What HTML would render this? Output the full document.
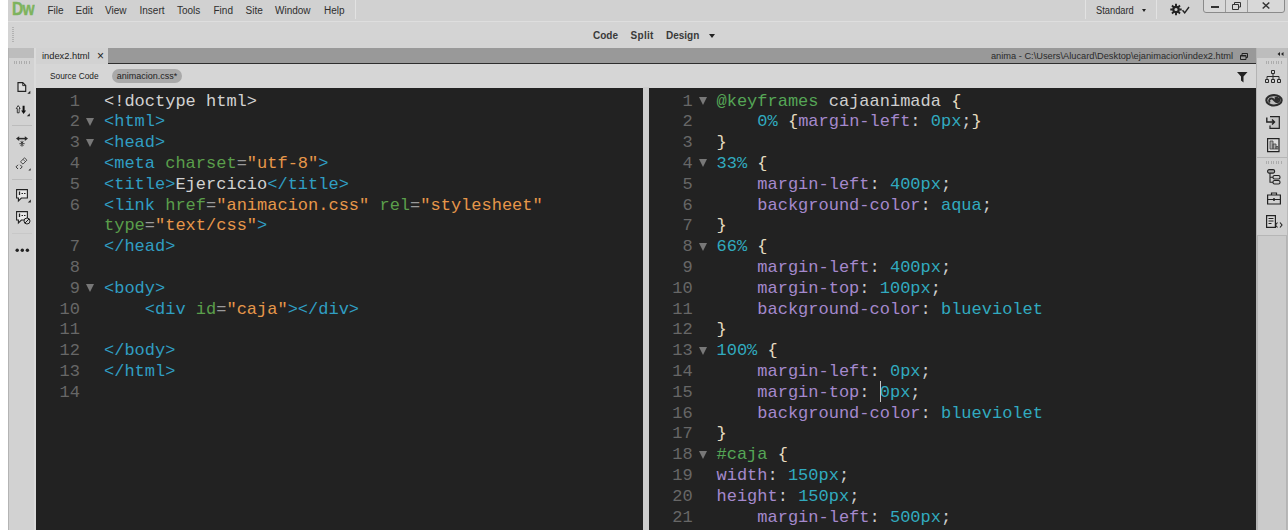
<!DOCTYPE html>
<html>
<head>
<meta charset="utf-8">
<title>Dreamweaver</title>
<style>
html,body{margin:0;padding:0;}
body{width:1288px;height:530px;overflow:hidden;background:#fff;position:relative;font-family:"Liberation Sans",sans-serif;color:#222;}
.abs{position:absolute;}
#menubar{left:8px;top:0;width:1280px;height:21px;background:#d1d1d1;}
#menubar .mi{position:absolute;top:3.500px;font-size:10px;line-height:13px;color:#2e2e2e;white-space:nowrap;}
#dw{-webkit-text-stroke:0.400px #7db35d;position:absolute;left:4px;top:-2px;font-size:19px;line-height:22px;font-weight:bold;color:#7db35d;letter-spacing:-1px;transform:scaleX(0.82);transform-origin:0 0;}
#toolbar{left:8px;top:21px;width:1280px;height:27px;background:#d4d4d4;border-top:1px solid #dedede;box-sizing:border-box;}
#toolbar .v{position:absolute;top:6.600px;font-size:10px;line-height:13px;font-weight:bold;color:#3a3a3a;}
#tabbar{left:36px;top:48px;width:1220px;height:16px;background:#999999;border-bottom:1px solid #2e2e2e;box-sizing:border-box;}
#tab{position:absolute;left:0;top:0;width:72px;height:16px;background:#d2d2d2;font-size:9.3px;line-height:15px;color:#222;}
#path{position:absolute;right:23px;top:1px;font-size:9.27px;line-height:15px;color:#2a2a2a;white-space:nowrap;}
#srcbar{left:36px;top:64px;width:1220px;height:24px;background:#d6d6d6;}
#srcbar .sc{position:absolute;left:14px;top:6px;font-size:9px;line-height:12px;color:#222;transform:scaleX(0.926);transform-origin:0 0;white-space:nowrap;}
#pill{position:absolute;left:76px;top:5px;width:70px;height:14px;border-radius:7px;background:#a9a9a9;font-size:9px;line-height:14px;text-align:center;color:#222;}
#leftbar{left:8px;top:48px;width:28px;height:482px;background:#d2d2d2;border-left:1px solid #b4b4b4;box-sizing:border-box;}
#leftbar .top{position:absolute;left:0;top:0;width:25px;height:10px;background:#bdbdbd;}
#leftbar .rb{position:absolute;left:25px;top:0;width:2px;height:482px;background:#dbdbdb;}
.grip{position:absolute;height:3px;background:repeating-linear-gradient(90deg,#acacac 0,#acacac 1px,transparent 1px,transparent 2.5px);}
.hsep{position:absolute;height:1px;background:#bcbcbc;}
svg{position:absolute;overflow:visible;}
#rightbar{left:1256px;top:48px;width:32px;height:482px;background:#d1d1d1;border-left:1px solid #b4b4b4;border-right:1px solid #b9b9b9;box-sizing:border-box;}
#rightbar .top{position:absolute;left:0;top:0;width:30px;height:10px;background:#bdbdbd;}
.ed{background:#222222;overflow:hidden;font-family:"Liberation Mono","DejaVu Sans Mono",monospace;font-size:17px;line-height:20.8px;color:#d6d6d6;}
#ed1{left:36px;top:88px;width:607px;height:442px;}
#ed2{left:649px;top:88px;width:607px;height:442px;}
#split{left:643px;top:87px;width:6px;height:443px;background:#cdcdcd;}
.ed{padding-top:3.6px;box-sizing:border-box;}
.row{position:relative;height:20.8px;}
.ln{position:absolute;left:0;top:0;width:44px;text-align:right;color:#676767;}
#ed2 .ln{width:43.7px;}
.code{position:absolute;left:68px;top:0;white-space:pre;}
#ed2 .code{left:67.5px;}
.fold{position:absolute;left:49.7px;top:5.4px;width:0;height:0;border-left:4.75px solid transparent;border-right:4.75px solid transparent;border-top:8.6px solid #787878;}
#ed2 .fold{left:49.5px;}
.t{color:#309ec2;}
.a{color:#5a9e4b;}
.s{color:#e6974a;}
.w{color:#d2d2d2;}
.e{color:#9a9a9a;}
.p{color:#a589cd;}
.n{color:#31aabf;}
.g{color:#55a656;}
.b{color:#e6dcc0;}
.c{color:#cfcfcf;}
</style>
</head>
<body>
<div id="menubar" class="abs">
<div id="dw">Dw</div>
<span class="mi" style="left:39.5px">File</span>
<span class="mi" style="left:67.5px">Edit</span>
<span class="mi" style="left:97px">View</span>
<span class="mi" style="left:131.5px">Insert</span>
<span class="mi" style="left:169px">Tools</span>
<span class="mi" style="left:205.5px">Find</span>
<span class="mi" style="left:237.5px">Site</span>
<span class="mi" style="left:267px">Window</span>
<span class="mi" style="left:316px">Help</span>
<div style="position:absolute;left:347px;top:0;width:1px;height:19px;background:#e2e2e2"></div>
<div style="position:absolute;left:1077px;top:0;width:1px;height:19px;background:#e2e2e2"></div>
<span class="mi" style="left:1088px;transform:scaleX(0.93);transform-origin:0 0;color:#2c2c2c">Standard</span>
<div style="position:absolute;left:1134px;top:9px;width:0;height:0;border-left:2.5px solid transparent;border-right:2.5px solid transparent;border-top:3px solid #222"></div>
<div style="position:absolute;left:1148px;top:0;width:1px;height:19px;background:#e2e2e2"></div>
<svg style="left:1162px;top:3px" width="22" height="13" viewBox="0 0 22 13"><g fill="none" stroke="#222"><circle cx="6" cy="6.500" r="2.700" stroke-width="2.200"/><path d="M6 0.800v2.400M6 9.800v2.400M0.300 6.500h2.400M9.300 6.500h2.400M2 2.500l1.700 1.700M8.300 8.800l1.700 1.700M2 10.500l1.700-1.700M8.300 4.200l1.700-1.700" stroke-width="1.900"/></g><path d="M12.500 7.200l2.200 2.600l4.300-5.800" fill="none" stroke="#222" stroke-width="1.400"/></svg>
<div style="position:absolute;left:1195px;top:-3px;width:82px;height:16px;border:1px solid #8a8a8a;border-radius:3px;box-sizing:border-box;background:#d8d8d8"></div>
<div style="position:absolute;left:1217px;top:0;width:1px;height:12px;background:#9a9a9a"></div>
<div style="position:absolute;left:1239px;top:0;width:1px;height:12px;background:#9a9a9a"></div>
<div style="position:absolute;left:1203px;top:6px;width:8px;height:2px;background:#333"></div>
<svg style="left:1224px;top:2px" width="9" height="8" viewBox="0 0 9 8"><path d="M2.5 2.5v-2h6v4.500h-2M0.5 2.500h6v5h-6z" fill="none" stroke="#333" stroke-width="1"/></svg>
<svg style="left:1254px;top:2px" width="8" height="7" viewBox="0 0 8 7"><path d="M0.700 0.500l6.600 6M7.300 0.500l-6.600 6" fill="none" stroke="#333" stroke-width="1.5"/></svg>
</div>
<div id="toolbar" class="abs">
<div style="position:absolute;left:4px;top:5px;width:2px;height:15px;background:repeating-linear-gradient(180deg,#b2b2b2 0,#b2b2b2 1px,transparent 1px,transparent 2px)"></div>
<span class="v" style="left:585px">Code</span>
<span class="v" style="left:622.500px;letter-spacing:0.300px">Split</span>
<span class="v" style="left:658px">Design</span>
<div style="position:absolute;left:701px;top:12px;width:0;height:0;border-left:3.500px solid transparent;border-right:3.500px solid transparent;border-top:4px solid #222"></div>
</div>
<div id="leftbar" class="abs"><div class="top"></div><div class="rb"></div>
<div class="grip" style="left:4.500px;top:13px;width:16.500px"></div>
<svg style="left:7.500px;top:33.600px" width="14" height="14" viewBox="0 0 14 14"><path d="M1 0.600h4.700l3 3v5.800h-7.700z" fill="#dedede" stroke="#222" stroke-width="1.150"/><path d="M5.700 0.600v3h3" fill="none" stroke="#222" stroke-width="0.900"/><path d="M13.300 8.800v3h-3z" fill="#222"/></svg>
<svg style="left:7px;top:56.500px" width="14" height="14" viewBox="0 0 14 14"><path d="M2.200 0.600l1.900 2.900h-1v4.300h-1.800v-4.300h-1z" fill="#f2f2f2" stroke="#222" stroke-width="0.900"/><path d="M6.600 0.700h2v4.800h1.500l-2.500 3.400l-2.500-3.400h1.500z" fill="#111"/><path d="M13.800 8.300v3h-3z" fill="#222"/></svg>
<div class="hsep" style="left:3px;top:77px;width:20px"></div>
<svg style="left:7px;top:88px" width="13" height="12" viewBox="0 0 13 12"><path d="M2 2.600h8" fill="none" stroke="#2a2a2a" stroke-width="1.500"/><path d="M0 2.600l3.200-2.300v4.600zM12 2.600l-3.200-2.300v4.600z" fill="#2a2a2a"/><path d="M3.400 7.700h5.200M6 4.800v2M6 10.600v-2M4.600 5.600l1.400 1.500l1.400-1.500M4.600 9.800l1.400-1.500l1.400 1.500" fill="none" stroke="#2a2a2a" stroke-width="0.900"/></svg>
<svg style="left:6px;top:109px" width="16" height="14" viewBox="0 0 16 14"><path d="M9.600 0.800l2.200 2.400l-3.800 3.900l-2.500-2.300z" fill="#dadada" stroke="#3a3a3a" stroke-width="0.900"/><path d="M8 2.300l2.300 2.300" fill="none" stroke="#3a3a3a" stroke-width="0.800"/><path d="M3 7.800l-2 2.100l2 2.100M5.200 7.800l2 2.100l-2 2.100" fill="none" stroke="#3a3a3a" stroke-width="1"/><path d="M15.600 11.300v2.200h-2.200z" fill="#222"/></svg>
<div class="hsep" style="left:3px;top:131px;width:20px"></div>
<svg style="left:7px;top:141px" width="15" height="14" viewBox="0 0 15 14"><path d="M0.600 0.600h10.800v8.400h-6l-3 3v-3h-1.800z" fill="#e8e8e8" stroke="#222" stroke-width="1.100"/><path d="M3.500 2.500v3.500" stroke="#222" stroke-width="1.300"/><path d="M3.500 7.500v0.100M5.500 4.500h1.500M8 4.500h1.500" stroke="#222" stroke-width="1.100"/><path d="M14.800 10.500v3h-3z" fill="#222"/></svg>
<svg style="left:7px;top:163px" width="16" height="15" viewBox="0 0 16 15"><path d="M0.600 0.600h10.800v8.400h-6l-3 3v-3h-1.800z" fill="#e8e8e8" stroke="#222" stroke-width="1.100"/><path d="M3.500 2.500v3.500" stroke="#222" stroke-width="1.300"/><path d="M3.500 7.500v0.100M5.500 4.500h1.500M8 4.500h1.500" stroke="#222" stroke-width="1.100"/><circle cx="11" cy="10" r="3" fill="#d2d2d2" stroke="#222" stroke-width="1"/><path d="M9 12l4-4" stroke="#222" stroke-width="1"/></svg>
<div class="hsep" style="left:3px;top:185px;width:20px;background:#c8c8c8"></div>
<svg style="left:6px;top:200px" width="15" height="5" viewBox="0 0 15 5"><circle cx="2.200" cy="2.300" r="1.700" fill="#222"/><circle cx="7.300" cy="2.300" r="1.700" fill="#222"/><circle cx="12.400" cy="2.300" r="1.700" fill="#222"/></svg>
</div>
<div id="rightbar" class="abs"><div class="top"></div>
<svg style="left:20px;top:3.500px" width="7" height="4" viewBox="0 0 7 4"><path d="M3 0v4l-2.500-2zM6.500 0v4l-2.500-2z" fill="#222"/></svg>
<div class="grip" style="left:9px;top:13px;width:16px"></div>
<svg style="left:8.300px;top:22px" width="16" height="13" viewBox="0 0 16 13"><path d="M6.500 0.500h3v3h-3zM0.500 9.500h3v3h-3zM6.500 9.500h3v3h-3zM12.500 9.500h3v3h-3zM8 3.500v6M2 9.500v-3h12v3" fill="none" stroke="#2a2a2a" stroke-width="1"/></svg>
<svg style="left:7.600px;top:45.500px" width="18" height="13" viewBox="0 0 18 13"><ellipse cx="9" cy="6.300" rx="7.700" ry="5.200" fill="#bdbdbd" stroke="#2c2c2c" stroke-width="2.100"/><path d="M4.800 8.500c-1.500-2 0-4.500 2.500-3.800c1.500 0.500 3 3.500 5 3.500c2 0 3-2.500 1.200-4.200" fill="none" stroke="#2c2c2c" stroke-width="1.900"/><path d="M9.500 3.500c2-1.500 5-0.500 4.500 2.500c-0.500 2-2.500 2.500-4 1.500z" fill="#2c2c2c"/></svg>
<svg style="left:8.700px;top:68px" width="14" height="13" viewBox="0 0 14 13"><path d="M4 0.600h9.300v11.800h-9.300v-3" fill="#c2c2c2" stroke="#222" stroke-width="1.200"/><path d="M0.800 1.500v4.500h7.500M6 3.500l2.500 2.500l-2.500 2.500" fill="none" stroke="#222" stroke-width="1.400"/></svg>
<svg style="left:10px;top:90px" width="14" height="15" viewBox="0 0 14 15"><path d="M0.600 0.600h11.400v13h-11.400z" fill="#dcdcdc" stroke="#222" stroke-width="1.200"/><path d="M3 3h3v8h-3zM6 6h3v5h-3zM9 8.500h2v2.500h-2z" fill="#aaa" stroke="#444" stroke-width="0.800"/></svg>
<div class="hsep" style="left:0;top:109px;width:30px;background:#b6b6b6"></div>
<div class="grip" style="left:9px;top:113px;width:16px"></div>
<svg style="left:10px;top:121px" width="14" height="16" viewBox="0 0 14 16"><rect x="0.600" y="0.600" width="7" height="3.500" rx="1.500" fill="#aaa" stroke="#222" stroke-width="1.100"/><rect x="6" y="6.500" width="7" height="3.500" rx="1.500" fill="#ccc" stroke="#222" stroke-width="1.100"/><rect x="6" y="11.500" width="7" height="3.500" rx="1.500" fill="#ccc" stroke="#222" stroke-width="1.100"/><path d="M3 4v9.300h3M3 8.300h3" fill="none" stroke="#222" stroke-width="1.100"/></svg>
<svg style="left:10px;top:144px" width="14" height="13" viewBox="0 0 14 13"><path d="M0.600 3h12.800v9h-12.800zM4.500 3v-2h5v2M0.600 7.500h12.800" fill="none" stroke="#222" stroke-width="1.200"/><path d="M7 6v3" stroke="#222" stroke-width="1.500"/></svg>
<svg style="left:9px;top:167px" width="17" height="14" viewBox="0 0 17 14"><path d="M0.600 0.600h8.800v11.800h-8.800z" fill="#d8d8d8" stroke="#222" stroke-width="1.200"/><path d="M2.500 3.500h5M2.500 6h5M2.500 8.500h3" stroke="#222" stroke-width="1"/><path d="M11.500 7.500l-2 2.500l2 2.500M14 7.500l2 2.500l-2 2.500" fill="none" stroke="#222" stroke-width="1.100"/></svg>
<div class="hsep" style="left:0;top:187px;width:30px;background:#b6b6b6"></div>
<div style="position:absolute;left:0;top:188px;width:30px;height:294px;background:#cbcbcb;border-left:1.500px solid #b4b4b4;border-right:1px solid #b4b4b4;box-sizing:border-box"></div>
</div>
<div id="tabbar" class="abs">
<div id="tab"><span style="position:absolute;left:6px;top:1px">index2.html</span><span style="position:absolute;left:61px;top:0.5px;font-size:12px">×</span></div>
<div id="path">anima - C:\Users\Alucard\Desktop\ejanimacion\index2.html</div>
<svg style="left:1204px;top:4.500px" width="8" height="7" viewBox="0 0 8 7"><path d="M2 2v-1.500h5.500v4h-1.500M0.500 2.500h5.500v4h-5.500z" fill="none" stroke="#222" stroke-width="1"/><path d="M0.500 2.800h5.500" stroke="#222" stroke-width="1.400"/></svg>
</div>
<div id="srcbar" class="abs"><span class="sc">Source Code</span><div id="pill">animacion.css*</div>
<svg style="left:1201px;top:8px" width="11" height="11" viewBox="0 0 11 11"><path d="M0 0h10.500l-4 4.500v6l-2.500-2v-4z" fill="#222"/></svg></div>
<div id="ed1" class="abs ed">
<div class="row"><span class="ln">1</span><span class="code"><span class="w">&lt;!doctype html&gt;</span></span></div>
<div class="row"><span class="ln">2</span><i class="fold"></i><span class="code"><span class="t">&lt;html&gt;</span></span></div>
<div class="row"><span class="ln">3</span><i class="fold"></i><span class="code"><span class="t">&lt;head&gt;</span></span></div>
<div class="row"><span class="ln">4</span><span class="code"><span class="t">&lt;meta </span><span class="a">charset</span><span class="e">=</span><span class="s">"utf-8"</span><span class="t">&gt;</span></span></div>
<div class="row"><span class="ln">5</span><span class="code"><span class="t">&lt;title&gt;</span><span class="w">Ejercicio</span><span class="t">&lt;/title&gt;</span></span></div>
<div class="row"><span class="ln">6</span><span class="code"><span class="t">&lt;link </span><span class="a">href</span><span class="e">=</span><span class="s">"animacion.css"</span><span class="w"> </span><span class="a">rel</span><span class="e">=</span><span class="s">"stylesheet"</span></span></div>
<div class="row"><span class="ln"></span><span class="code"><span class="a">type</span><span class="e">=</span><span class="s">"text/css"</span><span class="t">&gt;</span></span></div>
<div class="row"><span class="ln">7</span><span class="code"><span class="t">&lt;/head&gt;</span></span></div>
<div class="row"><span class="ln">8</span><span class="code"></span></div>
<div class="row"><span class="ln">9</span><i class="fold"></i><span class="code"><span class="t">&lt;body&gt;</span></span></div>
<div class="row"><span class="ln">10</span><span class="code"><span class="w">    </span><span class="t">&lt;div </span><span class="a">id</span><span class="e">=</span><span class="s">"caja"</span><span class="t">&gt;&lt;/div&gt;</span></span></div>
<div class="row"><span class="ln">11</span><span class="code"></span></div>
<div class="row"><span class="ln">12</span><span class="code"><span class="t">&lt;/body&gt;</span></span></div>
<div class="row"><span class="ln">13</span><span class="code"><span class="t">&lt;/html&gt;</span></span></div>
<div class="row"><span class="ln">14</span><span class="code"></span></div>
</div>
<div id="split" class="abs"></div>
<div id="ed2" class="abs ed">
<div class="row"><span class="ln">1</span><i class="fold"></i><span class="code"><span class="g">@keyframes</span><span class="c"> cajaanimada </span><span class="b">{</span></span></div>
<div class="row"><span class="ln">2</span><span class="code"><span class="n">    0% </span><span class="b">{</span><span class="p">margin-left</span><span class="c">: </span><span class="n">0px</span><span class="c">;</span><span class="b">}</span></span></div>
<div class="row"><span class="ln">3</span><span class="code"><span class="b">}</span></span></div>
<div class="row"><span class="ln">4</span><i class="fold"></i><span class="code"><span class="n">33% </span><span class="b">{</span></span></div>
<div class="row"><span class="ln">5</span><span class="code"><span class="p">    margin-left</span><span class="c">: </span><span class="n">400px</span><span class="c">;</span></span></div>
<div class="row"><span class="ln">6</span><span class="code"><span class="p">    background-color</span><span class="c">: </span><span class="n">aqua</span><span class="c">;</span></span></div>
<div class="row"><span class="ln">7</span><span class="code"><span class="b">}</span></span></div>
<div class="row"><span class="ln">8</span><i class="fold"></i><span class="code"><span class="n">66% </span><span class="b">{</span></span></div>
<div class="row"><span class="ln">9</span><span class="code"><span class="p">    margin-left</span><span class="c">: </span><span class="n">400px</span><span class="c">;</span></span></div>
<div class="row"><span class="ln">10</span><span class="code"><span class="p">    margin-top</span><span class="c">: </span><span class="n">100px</span><span class="c">;</span></span></div>
<div class="row"><span class="ln">11</span><span class="code"><span class="p">    background-color</span><span class="c">: </span><span class="n">blueviolet</span></span></div>
<div class="row"><span class="ln">12</span><span class="code"><span class="b">}</span></span></div>
<div class="row"><span class="ln">13</span><i class="fold"></i><span class="code"><span class="n">100% </span><span class="b">{</span></span></div>
<div class="row"><span class="ln">14</span><span class="code"><span class="p">    margin-left</span><span class="c">: </span><span class="n">0px</span><span class="c">;</span></span></div>
<div class="row"><span class="ln">15</span><i style="position:absolute;left:231px;top:-2px;width:1px;height:21px;background:#c4c4c4"></i><span class="code"><span class="p">    margin-top</span><span class="c">: </span><span class="n">0px</span><span class="c">;</span></span></div>
<div class="row"><span class="ln">16</span><span class="code"><span class="p">    background-color</span><span class="c">: </span><span class="n">blueviolet</span></span></div>
<div class="row"><span class="ln">17</span><span class="code"><span class="b">}</span></span></div>
<div class="row"><span class="ln">18</span><i class="fold"></i><span class="code"><span class="g">#caja </span><span class="b">{</span></span></div>
<div class="row"><span class="ln">19</span><span class="code"><span class="p">width</span><span class="c">: </span><span class="n">150px</span><span class="c">;</span></span></div>
<div class="row"><span class="ln">20</span><span class="code"><span class="p">height</span><span class="c">: </span><span class="n">150px</span><span class="c">;</span></span></div>
<div class="row"><span class="ln">21</span><span class="code"><span class="p">    margin-left</span><span class="c">: </span><span class="n">500px</span><span class="c">;</span></span></div>
<div class="row"><span class="ln">22</span><span class="code"><span class="p">background-color</span><span class="c">: </span><span class="n">red</span><span class="c">;</span></span></div>
</div>
</body>
</html>
